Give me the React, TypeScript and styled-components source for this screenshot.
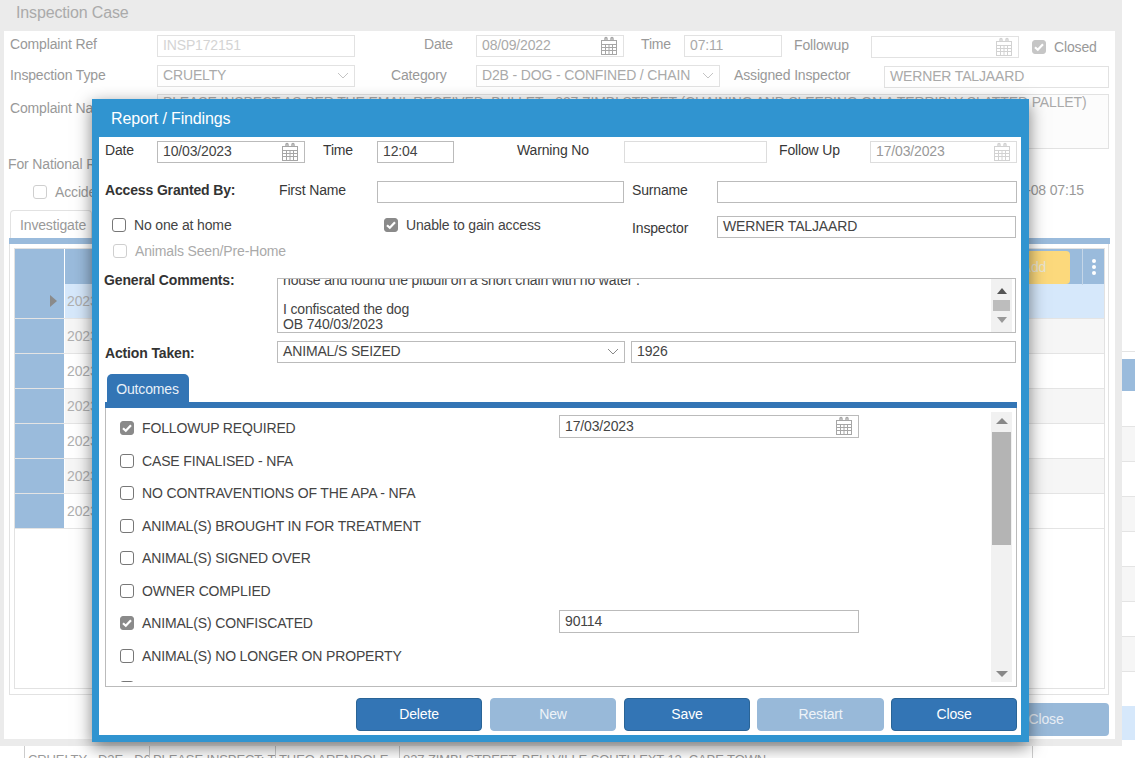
import React from "react";
import styled, { createGlobalStyle } from "styled-components";

const Global = createGlobalStyle`
  html, body { margin: 0; padding: 0; background: #fff; }
  body { width: 1135px; height: 758px; overflow: hidden; font-family: "Liberation Sans", Arial, sans-serif; font-size: 14px; letter-spacing: -0.15px; }
  * { box-sizing: border-box; }
`;

const Page = styled.div`
  position: relative;
  width: 1135px;
  height: 758px;
  overflow: hidden;
  display: grid;
  grid-template-columns: 1122px 13px;
  grid-template-rows: 746px 12px;
`;

/* ---------- background window ---------- */
const Window = styled.div`
  background: #ebebeb;
  display: flex;
  flex-direction: column;
`;
const WinTitle = styled.div`
  height: 31px;
  flex: none;
  width: 1114px;
  padding-left: 16px;
  font-size: 16px;
  line-height: 26px;
  color: #aaa;
`;
const WinBody = styled.div`
  flex: 1;
  margin: 0 7px 7px 4px;
  background: #fff;
  padding: 3px 0 0 6px;
  color: #999;
  display: flex;
  flex-direction: column;
`;
const Row = styled.div<{ $cols: string; $top?: number; $h?: number }>`
  display: grid;
  grid-template-columns: ${(p) => p.$cols};
  align-items: center;
  margin-top: ${(p) => p.$top ?? 0}px;
  height: ${(p) => (p.$h ? `${p.$h}px` : "auto")};
  flex: none;
`;
const Label = styled.div<{ $indent?: number; $shift?: number }>`
  padding-left: ${(p) => p.$indent ?? 0}px;
  margin-top: ${(p) => p.$shift ?? 0}px;
  white-space: nowrap;
  overflow: hidden;
`;
const BgField = styled.div<{ $faint?: boolean; $shift?: number }>`
  height: 22px;
  margin-top: ${(p) => p.$shift ?? 0}px;
  border: 1px solid #e2e2e2;
  padding: 0 5px 1px;
  line-height: 21px;
  color: ${(p) => (p.$faint ? "#d4d4d4" : "#aaa")};
  display: flex;
  align-items: center;
  justify-content: space-between;
  white-space: nowrap;
  overflow: hidden;
  background: #fff;
`;
const BgArea = styled.div`
  height: 55px;
  border: 1px solid #e2e2e2;
  background: #fcfcfc;
  padding: 0 5px;
  line-height: 15px;
  letter-spacing: -0.125px;
  color: #aaa;
  white-space: nowrap;
  overflow: hidden;
`;
const NatLabel = styled.div`
  margin: 7px 0 0 -2px;
  height: 16px;
  line-height: 16px;
`;
const AccidentRow = styled.div`
  margin-top: 10px;
  height: 20px;
  padding-left: 23px;
  display: flex;
  align-items: center;
  gap: 8px;
  flex: none;
`;
const Stamp = styled.div`
  margin-left: auto;
  margin-right: 31px;
  margin-top: -4px;
`;
const BgTab = styled.div`
  margin-top: 8px;
  width: 82px;
  height: 28px;
  flex: none;
  border: 1px solid #e2e2e2;
  border-bottom: 0;
  border-radius: 4px 4px 0 0;
  padding-left: 9px;
  line-height: 28px;
`;
const BgBar = styled.div`
  height: 6px;
  flex: none;
  width: 1101px;
  margin-left: -1px;
  background: #9abbdc;
`;
const BgPanel = styled.div`
  width: 1100px;
  height: 451px;
  flex: none;
  margin-left: -1px;
  border: 1px solid #e2e2e2;
  border-top: 0;
  padding: 4px 3px 5px 4px;
`;
const BgGrid = styled.div`
  height: 100%;
  border: 1px solid #e2e2e2;
`;
const GridRow = styled.div<{ $bg?: string }>`
  display: grid;
  grid-template-columns: 50px 1fr;
  height: 35px;
  background: ${(p) => p.$bg ?? "#fff"};
  border-bottom: 1px solid #e4e4e4;
  color: #b0b0b0;
`;
const RowHead = styled.div`
  background: #9abbdc;
  border-right: 1px solid #fff;
  display: flex;
  align-items: center;
  justify-content: flex-end;
  padding-right: 7px;
`;
const RowCell = styled.div`
  padding-left: 2px;
  line-height: 34px;
`;
const Caret = styled.span`
  width: 0;
  height: 0;
  border-left: 7px solid #8a8a8a;
  border-top: 6px solid transparent;
  border-bottom: 6px solid transparent;
`;
const GridHead = styled.div`
  display: grid;
  grid-template-columns: 50px 1fr 21px;
  height: 35px;
  background: #9abbdc;
`;
const HeadCol = styled.div`
  border-right: 1px solid #c4d6e8;
  display: flex;
  justify-content: flex-end;
  padding: 2px 12px 1px 0;
`;
const AddBtn = styled.div`
  width: 90px;
  background: #fcd97c;
  border-radius: 4px;
  color: #e9e5d3;
  text-align: center;
  line-height: 33px;
  padding-left: 18px;
`;
const Dots = styled.div`
  display: flex;
  flex-direction: column;
  align-items: center;
  justify-content: center;
  gap: 2px;
`;
const Dot = styled.span`
  width: 4px;
  height: 4px;
  border-radius: 50%;
  background: #fff;
`;
const BgFooter = styled.div`
  margin-top: 8px;
  padding-right: 6px;
  display: flex;
  justify-content: flex-end;
`;
const BgClose = styled.div`
  width: 126px;
  height: 33px;
  background: #98b9d9;
  border-radius: 4px;
  color: #e8eef5;
  text-align: center;
  line-height: 33px;
`;
const ClosedCheck = styled.div`
  display: flex;
  align-items: center;
  gap: 8px;
  padding-left: 13px;
  margin-top: 1px;
`;

/* ---------- list peeking out on the right and the bottom ---------- */
const SideList = styled.div`
  display: flex;
  flex-direction: column;
  padding-top: 351px;
`;
const SideRow = styled.div<{ $h: number; $bg?: string; $line?: boolean }>`
  height: ${(p) => p.$h}px;
  flex: none;
  background: ${(p) => p.$bg ?? "#fff"};
  border-top: ${(p) => (p.$line ? "1px solid #e4e4e4" : "0")};
`;
const BottomRow = styled.div`
  grid-column: 1 / 3;
  display: grid;
  grid-template-columns: 125px 126px 124px 634px;
  margin: 0 0 0 24px;
  width: 1010px;
  color: #999;
  font-size: 13px;
  letter-spacing: -0.1px;
`;
const BottomCell = styled.div`
  border-left: 1px solid #ccc;
  padding: 6px 0 0 3px;
  white-space: nowrap;
  overflow: hidden;
  line-height: 16px;
  &:last-child { border-right: 1px solid #ccc; }
`;

/* ---------- dialog ---------- */
const Modal = styled.div`
  position: absolute;
  left: 92px;
  top: 99px;
  width: 937px;
  height: 643px;
  background: #fff;
  border-style: solid;
  border-color: #3094d0;
  border-width: 0 8px 7px 7px;
  box-shadow: 0 5px 16px rgba(0, 0, 0, 0.5);
  color: #383838;
  display: flex;
  flex-direction: column;
`;
const ModalHead = styled.div`
  height: 38px;
  flex: none;
  margin: 0 0 0 -7px;
  background: #3094d0;
  color: #fff;
  font-size: 16px;
  line-height: 39px;
  padding-left: 19px;
`;
const ModalBody = styled.div`
  flex: 1;
  padding: 4px 0 0 6px;
  display: flex;
  flex-direction: column;
`;
const Field = styled.div<{ $muted?: boolean; $light?: boolean; $tall?: boolean; $shift?: number }>`
  height: ${(p) => (p.$tall ? 23 : 22)}px;
  margin-top: ${(p) => p.$shift ?? 0}px;
  border: 1px solid ${(p) => (p.$light ? "#ddd" : "#bbb")};
  background: #fff;
  padding: 0 5px ${(p) => (p.$tall ? 1 : 3)}px;
  line-height: 18px;
  color: ${(p) => (p.$muted ? "#999" : "#444")};
  display: flex;
  align-items: center;
  justify-content: space-between;
  white-space: nowrap;
  overflow: hidden;
  & > svg { margin-bottom: ${(p) => (p.$tall ? 0 : -2)}px; }
`;
const Bold = styled.div<{ $shift?: number; $left?: number }>`
  font-weight: 700;
  color: #333;
  white-space: nowrap;
  margin-top: ${(p) => p.$shift ?? 0}px;
  margin-left: ${(p) => p.$left ?? 0}px;
`;
const CheckLine = styled.div<{ $indent?: number; $dim?: boolean; $shift?: number }>`
  display: flex;
  align-items: center;
  gap: 8px;
  padding-left: ${(p) => p.$indent ?? 0}px;
  margin-top: ${(p) => p.$shift ?? 0}px;
  color: ${(p) => (p.$dim ? "#aaa" : "#444")};
  white-space: nowrap;
`;
const Box = styled.span<{ $on?: boolean; $dim?: boolean }>`
  width: 14px;
  height: 14px;
  flex: none;
  border-radius: 3px;
  border: 1px solid ${(p) => (p.$on ? (p.$dim ? "#c6c6c6" : "#8a8a8a") : p.$dim ? "#cfcfcf" : "#777")};
  background: ${(p) => (p.$on ? (p.$dim ? "#c6c6c6" : "#8a8a8a") : "#fff")};
  display: inline-flex;
  align-items: center;
  justify-content: center;
`;
const CommentBox = styled.div`
  height: 55px;
  border: 1px solid #bbb;
  display: flex;
  overflow: hidden;
`;
const CommentText = styled.div`
  flex: 1;
  padding: 0 5px;
  margin-top: -6px;
  line-height: 14.6px;
  color: #444;
  white-space: pre-line;
`;
const Scroll = styled.div<{ $w: number; $right?: number }>`
  width: ${(p) => p.$w}px;
  flex: none;
  margin-right: ${(p) => p.$right ?? 3}px;
  background: #f1f1f1;
  display: flex;
  flex-direction: column;
  align-items: center;
`;
const Arrow = styled.span<{ $down?: boolean; $c: string; $s?: number }>`
  width: 0;
  height: 0;
  border-left: ${(p) => p.$s ?? 5}px solid transparent;
  border-right: ${(p) => p.$s ?? 5}px solid transparent;
  ${(p) =>
    p.$down
      ? `border-top: 6px solid ${p.$c};`
      : `border-bottom: 6px solid ${p.$c};`}
`;
const ThumbSmall = styled.div`
  width: 17px;
  height: 11px;
  margin: 6px 0;
  background: #bdbdbd;
`;
const Tab = styled.div`
  margin: 11px 0 0 2px;
  width: 82px;
  height: 28px;
  flex: none;
  background: #3375b5;
  border-radius: 5px 5px 0 0;
  color: #e8f0f8;
  text-align: center;
  line-height: 30px;
  padding-right: 1px;
`;
const TabBar = styled.div`
  width: 912px;
  height: 6px;
  flex: none;
  background: #3375b5;
`;
const Panel = styled.div`
  width: 912px;
  height: 279px;
  flex: none;
  border: 1px solid #bbb;
  border-top: 0;
  padding: 0 4px 4px 0;
  display: flex;
`;
const OutcomeList = styled.div`
  flex: 1;
  padding: 4px 0 0 14px;
  overflow: hidden;
  height: 274px;
`;
const Outcome = styled.div`
  display: grid;
  grid-template-columns: 439px 300px;
  align-items: center;
  height: 32.5px;
`;
const BigScroll = styled(Scroll)`
  margin-top: 4px;
  height: 270px;
  padding: 6px 0 5px;
`;
const Thumb = styled.div`
  width: 19px;
  height: 113px;
  margin-top: 8px;
  background: #b4b4b4;
`;
const Spacer = styled.div`
  flex: 1;
`;
const Buttons = styled.div`
  margin-top: 11px;
  padding-right: 4px;
  display: flex;
  justify-content: flex-end;
  gap: 8px;
`;
const Btn = styled.div<{ $off?: boolean; $w?: number; $pull?: boolean }>`
  width: ${(p) => p.$w ?? 126}px;
  height: 33px;
  margin-left: ${(p) => (p.$pull ? -1 : 0)}px;
  border-radius: 4px;
  border: 1px solid ${(p) => (p.$off ? "#98b9d9" : "#2a6496")};
  background: ${(p) => (p.$off ? "#98b9d9" : "#3375b5")};
  color: ${(p) => (p.$off ? "#eef3f8" : "#fff")};
  text-align: center;
  line-height: 31px;
`;

/* ---------- drawings ---------- */
const Calendar = ({ faint }: { faint?: boolean }) => {
  const c = faint ? "#d2d2d2" : "#a6a6a6";
  return (
    <svg width="18" height="20" viewBox="0 0 18 20" fill="none" stroke={c} strokeWidth="1" style={{ flex: "none" }}>
      <rect x="1.5" y="4.5" width="15" height="14" />
      <path d="M1.5 8.5h15M1.5 11.5h15M1.5 14.5h15M5.5 8.5v10M9 8.5v10M12.5 8.5v10" />
      <path d="M5 5V2.5a1 1 0 0 1 2 0V5M11 5V2.5a1 1 0 0 1 2 0V5" strokeWidth="1.4" />
    </svg>
  );
};
const Chevron = ({ faint }: { faint?: boolean }) => (
  <svg width="12" height="7" viewBox="0 0 12 7" fill="none" stroke={faint ? "#c4c4c4" : "#888"} strokeWidth="1" style={{ flex: "none" }}>
    <path d="M1 1l5 5 5-5" />
  </svg>
);
const Check = ({ on, dim }: { on?: boolean; dim?: boolean }) => (
  <Box $on={on} $dim={dim}>
    {on && (
      <svg width="12" height="12" viewBox="0 0 12 12" fill="none" stroke="#fff" strokeWidth="2.2">
        <path d="M2 6.2l2.8 2.6L10 3.2" />
      </svg>
    )}
  </Box>
);

const outcomes: { t: string; on?: boolean; field?: React.ReactNode }[] = [
  { t: "FOLLOWUP REQUIRED", on: true, field: <>17/03/2023<Calendar /></> },
  { t: "CASE FINALISED - NFA" },
  { t: "NO CONTRAVENTIONS OF THE APA - NFA" },
  { t: "ANIMAL(S) BROUGHT IN FOR TREATMENT" },
  { t: "ANIMAL(S) SIGNED OVER" },
  { t: "OWNER COMPLIED" },
  { t: "ANIMAL(S) CONFISCATED", on: true, field: "90114" },
  { t: "ANIMAL(S) NO LONGER ON PROPERTY" },
  { t: "" },
];

const sideRows: { h: number; bg?: string; line?: boolean }[] = [
  { h: 8, line: true },
  { h: 32, bg: "#9abbdc" },
  { h: 35 },
  { h: 35, bg: "#f6f6f6", line: true },
  { h: 35, line: true },
  { h: 35, bg: "#f6f6f6", line: true },
  { h: 35, line: true },
  { h: 35, bg: "#f6f6f6", line: true },
  { h: 35, line: true },
  { h: 35, bg: "#f6f6f6", line: true },
  { h: 35, line: true },
  { h: 34, bg: "#d6e8fb" },
];

const App = () => (
  <Page>
    <Global />
    <Window>
      <WinTitle>Inspection Case</WinTitle>
      <WinBody>
        <Row $cols="147px 198px 121px 148px 60px 98px 89px 148px 1fr" $h={22}>
          <Label $shift={-4}>Complaint Ref</Label>
          <BgField $faint>INSP172151</BgField>
          <Label $indent={69} $shift={-5}>Date</Label>
          <BgField>08/09/2022<Calendar /></BgField>
          <Label $indent={17} $shift={-5}>Time</Label>
          <BgField>07:11</BgField>
          <Label $indent={12} $shift={-2}>Followup</Label>
          <BgField $shift={2}><span /><Calendar faint /></BgField>
          <ClosedCheck><Check on dim />Closed</ClosedCheck>
        </Row>
        <Row $cols="147px 198px 121px 244px 164px 225px" $top={8} $h={23}>
          <Label $shift={-2}>Inspection Type</Label>
          <BgField>CRUELTY<Chevron faint /></BgField>
          <Label $indent={36} $shift={-2}>Category</Label>
          <BgField>D2B - DOG - CONFINED / CHAIN<Chevron faint /></BgField>
          <Label $indent={14} $shift={-2}>Assigned Inspector</Label>
          <BgField $shift={2}>WERNER TALJAARD</BgField>
        </Row>
        <Row $cols="147px 952px" $top={7} $h={55}>
          <Label $shift={-28}>Complaint Name</Label>
          <BgArea>PLEASE INSPECT AS PER THE EMAIL RECEIVED: BULLET - 837 ZIMBI STREET (CHAINING AND SLEEPING ON A TERRIBLY SLATTED PALLET)</BgArea>
        </Row>
        <NatLabel>For National Register</NatLabel>
        <AccidentRow>
          <Check dim />
          Accident
          <Stamp>2022-09-08 07:15</Stamp>
        </AccidentRow>
        <BgTab>Investigate</BgTab>
        <BgBar />
        <BgPanel>
          <BgGrid>
            <GridHead>
              <RowHead />
              <HeadCol><AddBtn>Add</AddBtn></HeadCol>
              <Dots><Dot /><Dot /><Dot /></Dots>
            </GridHead>
            {[0, 1, 2, 3, 4, 5, 6].map((i) => (
              <GridRow key={i} $bg={i === 0 ? "#d6e8fb" : i % 2 ? "#f6f6f6" : "#fff"}>
                <RowHead>{i === 0 && <Caret />}</RowHead>
                <RowCell>2023</RowCell>
              </GridRow>
            ))}
          </BgGrid>
        </BgPanel>
        <BgFooter><BgClose>Close</BgClose></BgFooter>
      </WinBody>
    </Window>
    <SideList>
      {sideRows.map((r, i) => (
        <SideRow key={i} $h={r.h} $bg={r.bg} $line={r.line} />
      ))}
    </SideList>
    <BottomRow>
      <BottomCell>CRUELTY - D2E - D6</BottomCell>
      <BottomCell>PLEASE INSPECT: T</BottomCell>
      <BottomCell>THEO ARENDOLE</BottomCell>
      <BottomCell>837 ZIMBI STREET, BELLVILLE SOUTH EXT 12, CAPE TOWN</BottomCell>
    </BottomRow>

    <Modal>
      <ModalHead>Report / Findings</ModalHead>
      <ModalBody>
        <Row $cols="52px 148px 72px 77px 170px 143px 103px 147px" $h={22}>
          <Label $shift={-4}>Date</Label>
          <Field>10/03/2023<Calendar /></Field>
          <Label $indent={18} $shift={-4}>Time</Label>
          <Field>12:04</Field>
          <Label $indent={63} $shift={-4}>Warning No</Label>
          <Field $light />
          <Label $indent={12} $shift={-4}>Follow Up</Label>
          <Field $muted $light>17/03/2023<Calendar faint /></Field>
        </Row>
        <Row $cols="174px 98px 247px 93px 300px" $top={18} $h={22}>
          <Bold $shift={-4}>Access Granted By:</Bold>
          <Label $shift={-4}>First Name</Label>
          <Field />
          <Label $indent={8} $shift={-4}>Surname</Label>
          <Field />
        </Row>
        <Row $cols="272px 255px 85px 299px" $top={13} $h={22}>
          <CheckLine $indent={7} $shift={-4}><Check />No one at home</CheckLine>
          <CheckLine $indent={7} $shift={-4}><Check on />Unable to gain access</CheckLine>
          <Label $shift={2}>Inspector</Label>
          <Field>WERNER TALJAARD</Field>
        </Row>
        <Row $cols="300px" $top={4} $h={18}>
          <CheckLine $indent={8} $dim><Check dim />Animals Seen/Pre-Home</CheckLine>
        </Row>
        <Row $cols="172px 739px" $top={18} $h={55}>
          <Bold $shift={-51} $left={-1}>General Comments:</Bold>
          <CommentBox>
            <CommentText>{"house and found the pitbull on a short chain with no water .\n\nI confiscated the dog\nOB 740/03/2023"}</CommentText>
            <Scroll $w={21}>
              <Spacer />
              <Arrow $c="#555" />
              <ThumbSmall />
              <Arrow $down $c="#999" />
              <Spacer />
            </Scroll>
          </CommentBox>
        </Row>
        <Row $cols="172px 348px 6px 385px" $top={8} $h={22}>
          <Bold $shift={2}>Action Taken:</Bold>
          <Field>ANIMAL/S SEIZED<Chevron /></Field>
          <span />
          <Field>1926</Field>
        </Row>
        <Tab>Outcomes</Tab>
        <TabBar />
        <Panel>
          <OutcomeList>
            {outcomes.map((o, i) => (
              <Outcome key={i}>
                <CheckLine><Check on={o.on} />{o.t}</CheckLine>
                {o.field && <Field $tall $shift={-3}>{o.field}</Field>}
              </Outcome>
            ))}
          </OutcomeList>
          <BigScroll $w={21} $right={0}>
            <Arrow $c="#888" $s={6} />
            <Thumb />
            <Spacer />
            <Arrow $down $c="#888" $s={6} />
          </BigScroll>
        </Panel>
        <Buttons>
          <Btn>Delete</Btn>
          <Btn $off>New</Btn>
          <Btn>Save</Btn>
          <Btn $off $w={127} $pull>Restart</Btn>
          <Btn $pull>Close</Btn>
        </Buttons>
      </ModalBody>
    </Modal>
  </Page>
);

export default App;
